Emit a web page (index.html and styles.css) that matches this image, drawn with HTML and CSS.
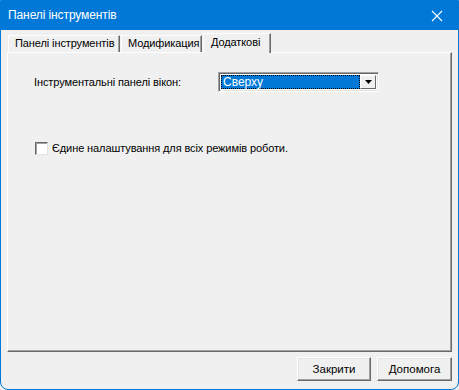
FILE: index.html
```html
<!DOCTYPE html>
<html lang="uk">
<head>
<meta charset="utf-8">
<title>Панелі інструментів</title>
<link rel="stylesheet" href="styles.css">
</head>
<body>
<div class="window">
  <div class="titlebar">
    <span class="title">Панелі інструментів</span>
    <svg class="close" width="12" height="12" viewBox="0 0 12 12"><path d="M1 1 L11 11 M11 1 L1 11" stroke="#fff" stroke-width="1.1" fill="none"/></svg>
  </div>
  <div class="content">
    <div class="tabs">
      <div class="tab tab-panels">Панелі інструментів</div>
      <div class="tab tab-mod">Модификация</div>
      <div class="tab tab-extra active">Додаткові</div>
    </div>
    <div class="panel">
      <div class="row">
        <span class="label">Інструментальні панелі вікон:</span>
        <div class="combo">
          <div class="combo-field"><span class="combo-text">Сверху</span></div>
          <div class="combo-btn"><svg width="7" height="4" viewBox="0 0 7 4"><path d="M0 0 H7 L3.5 4 Z" fill="#000"/></svg></div>
        </div>
      </div>
      <label class="check-row">
        <span class="checkbox"></span>
        <span class="check-text">Єдине налаштування для всіх режимів роботи.</span>
      </label>
    </div>
  </div>
  <div class="footer">
    <button class="btn btn-close">Закрити</button>
    <button class="btn btn-help">Допомога</button>
  </div>
</div>
</body>
</html>
```
FILE: styles.css
```css
* { box-sizing: border-box; }
html, body { margin: 0; padding: 0; background: #f0f0f0; }
body { font-family: "Liberation Sans", Arial, sans-serif; font-size: 11px; color: #000; }

.window {
  width: 459px;
  height: 390px;
  border: 1px solid #0078d7;
  border-radius: 0 0 8px 8px;
  background: #f0f0f0;
  display: flex;
  flex-direction: column;
  overflow: hidden;
}

.titlebar {
  height: 29px;
  background: #0078d7;
  color: #fff;
  display: flex;
  align-items: center;
  justify-content: space-between;
  padding: 0 15px 1px 7px;
  flex: none;
}
.title { font-size: 12px; letter-spacing: -0.1px; }
.close { display: block; margin-top: 1px; }

.content {
  padding: 0 6px;
  flex: none;
}

.tabs {
  display: flex;
  align-items: flex-end;
  height: 22px;
  padding-left: 1px;
  position: relative;
  z-index: 1;
}
.tab {
  height: 17px;
  border-top: 1px solid #fff;
  border-left: 1px solid #fff;
  border-right: 1px solid #696969;
  box-shadow: inset -1px 0 #a0a0a0;
  padding: 1px 0 0 6px;
  margin-right: 1px;
  background: #f0f0f0;
  white-space: nowrap;
  letter-spacing: -0.1px;
}
.tab-panels { width: 112px; }
.tab-mod { width: 81px; }
.tab-extra { width: 68px; }
.tab.active {
  height: 20px;
  margin-bottom: -1px;
  padding-top: 2px;
  padding-left: 7px;
}

.panel {
  height: 300px;
  border-top: 1px solid #fff;
  border-left: 1px solid #fff;
  border-right: 1px solid #696969;
  border-bottom: 1px solid #696969;
  box-shadow: inset -1px -1px #a0a0a0;
  padding: 19px 0 0 26px;
}

.row {
  display: flex;
  align-items: center;
}
.label { width: 184px; padding-bottom: 1px; letter-spacing: -0.1px; }

.combo {
  width: 161px;
  height: 20px;
  display: flex;
  border-top: 1px solid #a0a0a0;
  border-left: 1px solid #a0a0a0;
  border-right: 1px solid #fff;
  border-bottom: 1px solid #fff;
  box-shadow: inset 1px 1px #696969, inset -1px -1px #e3e3e3;
  padding: 2px;
  background: #fff;
}
.combo-field {
  flex: 1;
  background: #0078d7;
  border: 1px dotted #000;
  display: flex;
  align-items: center;
  padding-left: 1px;
}
.combo-text { color: #fff; font-size: 12px; }
.combo-btn {
  width: 16px;
  background: #f0f0f0;
  border-top: 1px solid #fff;
  border-left: 1px solid #fff;
  border-right: 1px solid #696969;
  border-bottom: 1px solid #696969;
  display: flex;
  align-items: center;
  justify-content: center;
}

.check-row {
  display: flex;
  align-items: center;
  margin-top: 50px;
  margin-left: 1px;
}
.checkbox {
  width: 13px;
  height: 13px;
  background: #fff;
  border-top: 1px solid #696969;
  border-left: 1px solid #696969;
  border-right: 1px solid #e3e3e3;
  border-bottom: 1px solid #e3e3e3;
  box-shadow: inset 1px 1px #a0a0a0;
  margin-right: 4px;
}
.check-text { padding-bottom: 1px; letter-spacing: -0.1px; }

.footer {
  display: flex;
  justify-content: flex-end;
  gap: 6px;
  padding: 5px 6px 0 0;
}
.btn {
  height: 24px;
  font-family: "Liberation Sans", Arial, sans-serif;
  font-size: 11.5px;
  color: #000;
  background: #f0f0f0;
  border-top: 1px solid #fff;
  border-left: 1px solid #fff;
  border-right: 1px solid #696969;
  border-bottom: 1px solid #696969;
  box-shadow: inset -1px -1px #a0a0a0, inset 1px 1px #e3e3e3;
  padding: 0;
}
.btn-close { width: 74px; }
.btn-help { width: 75px; }
```
